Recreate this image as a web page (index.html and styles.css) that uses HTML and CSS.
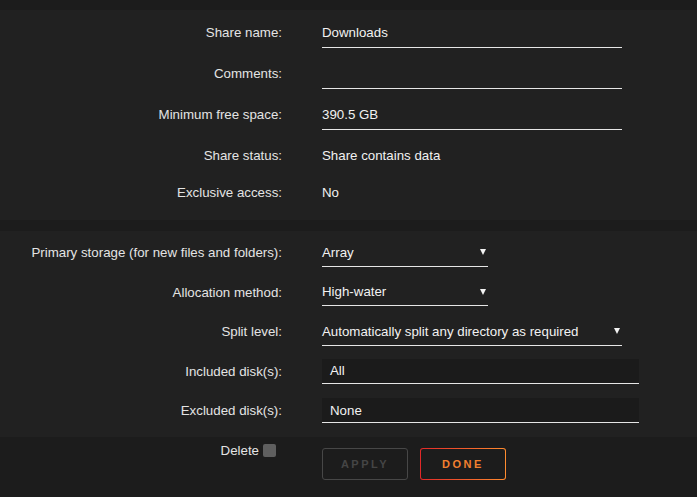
FILE: index.html
```html
<!DOCTYPE html>
<html lang="en">
<head>
    <meta charset="UTF-8">
    <meta name="viewport" content="width=device-width, initial-scale=1.0">
    <title>Share Settings</title>
    <link rel="stylesheet" href="styles.css">
</head>
<body>
    <div class="panel panel-top">
        <div class="row">
            <span class="label">Share name:</span>
            <div class="field text-field">Downloads</div>
        </div>
        <div class="row">
            <span class="label">Comments:</span>
            <div class="field text-field"></div>
        </div>
        <div class="row">
            <span class="label">Minimum free space:</span>
            <div class="field text-field">390.5 GB</div>
        </div>
        <div class="row">
            <span class="label">Share status:</span>
            <span class="value">Share contains data</span>
        </div>
        <div class="row row-last">
            <span class="label">Exclusive access:</span>
            <span class="value">No</span>
        </div>
    </div>

    <div class="panel panel-bottom">
        <div class="row row-tight">
            <span class="label">Primary storage (for new files and folders):</span>
            <div class="field select short">Array<span class="arrow"></span></div>
        </div>
        <div class="row row-tight">
            <span class="label">Allocation method:</span>
            <div class="field select short">High-water<span class="arrow"></span></div>
        </div>
        <div class="row row-tight">
            <span class="label">Split level:</span>
            <div class="field select">Automatically split any directory as required<span class="arrow"></span></div>
        </div>
        <div class="row row-tight">
            <span class="label">Included disk(s):</span>
            <div class="field disks">All</div>
        </div>
        <div class="row row-tight">
            <span class="label">Excluded disk(s):</span>
            <div class="field disks">None</div>
        </div>
    </div>

    <div class="actions">
        <div class="delete">
            <span>Delete</span>
            <span class="checkbox"></span>
        </div>
        <div class="buttons">
            <button class="btn apply">APPLY</button>
            <button class="btn done">DONE</button>
        </div>
    </div>
</body>
</html>
```

FILE: styles.css
```css
body {
    margin: 0;
    padding-top: 10px;
    background-color: #1c1c1c;
    font-family: "Liberation Sans", Arial, sans-serif;
    font-size: 13.3px;
    color: #f2f2f2;
}

.panel {
    background-color: #212121;
}

.panel-top {
    padding: 2px 0 11px;
    margin-bottom: 11px;
}

.panel-bottom {
    padding: 2px 0 6.5px;
}

.row {
    display: flex;
    align-items: center;
    height: 41px;
}

.row-last {
    height: 33px;
}

.row-tight {
    height: 39.5px;
}

.label {
    width: 282px;
    text-align: right;
    margin-right: 40px;
    color: #e4e4e4;
}

.value {
    color: #f2f2f2;
}

.field {
    box-sizing: border-box;
    display: flex;
    align-items: center;
    border-bottom: 1px solid #e6e6e6;
}

.text-field {
    width: 300px;
    height: 30px;
}

.select {
    width: 300px;
    height: 28px;
    justify-content: space-between;
}

.select.short {
    width: 166px;
}

.arrow {
    width: 0;
    height: 0;
    margin-right: 2px;
    border-left: 3px solid transparent;
    border-right: 3px solid transparent;
    border-top: 6px solid #f2f2f2;
}

.disks {
    width: 317px;
    height: 25px;
    padding-left: 8px;
    background-color: #1b1b1b;
}

.actions {
    display: flex;
    align-items: flex-start;
    padding-top: 11px;
}

.delete {
    width: 276px;
    margin-right: 46px;
    display: flex;
    justify-content: flex-end;
    align-items: center;
    gap: 4px;
    margin-top: -5px;
    color: #e4e4e4;
}

.checkbox {
    width: 13px;
    height: 13px;
    border-radius: 2px;
    background-color: #5f5f5f;
}

.buttons {
    display: flex;
    gap: 12px;
}

.btn {
    width: 86px;
    height: 32px;
    background: none;
    font-family: "Liberation Sans", Arial, sans-serif;
    font-size: 11px;
    font-weight: bold;
    letter-spacing: 2.5px;
    border-radius: 3px;
    cursor: pointer;
}

.apply {
    border: 1px solid #474747;
    color: #454545;
}

.done {
    border: 1px solid transparent;
    background: linear-gradient(#1c1c1c, #1c1c1c) padding-box,
                linear-gradient(90deg, #e22828, #ff8c2f) border-box;
    color: #f2802f;
}
```
